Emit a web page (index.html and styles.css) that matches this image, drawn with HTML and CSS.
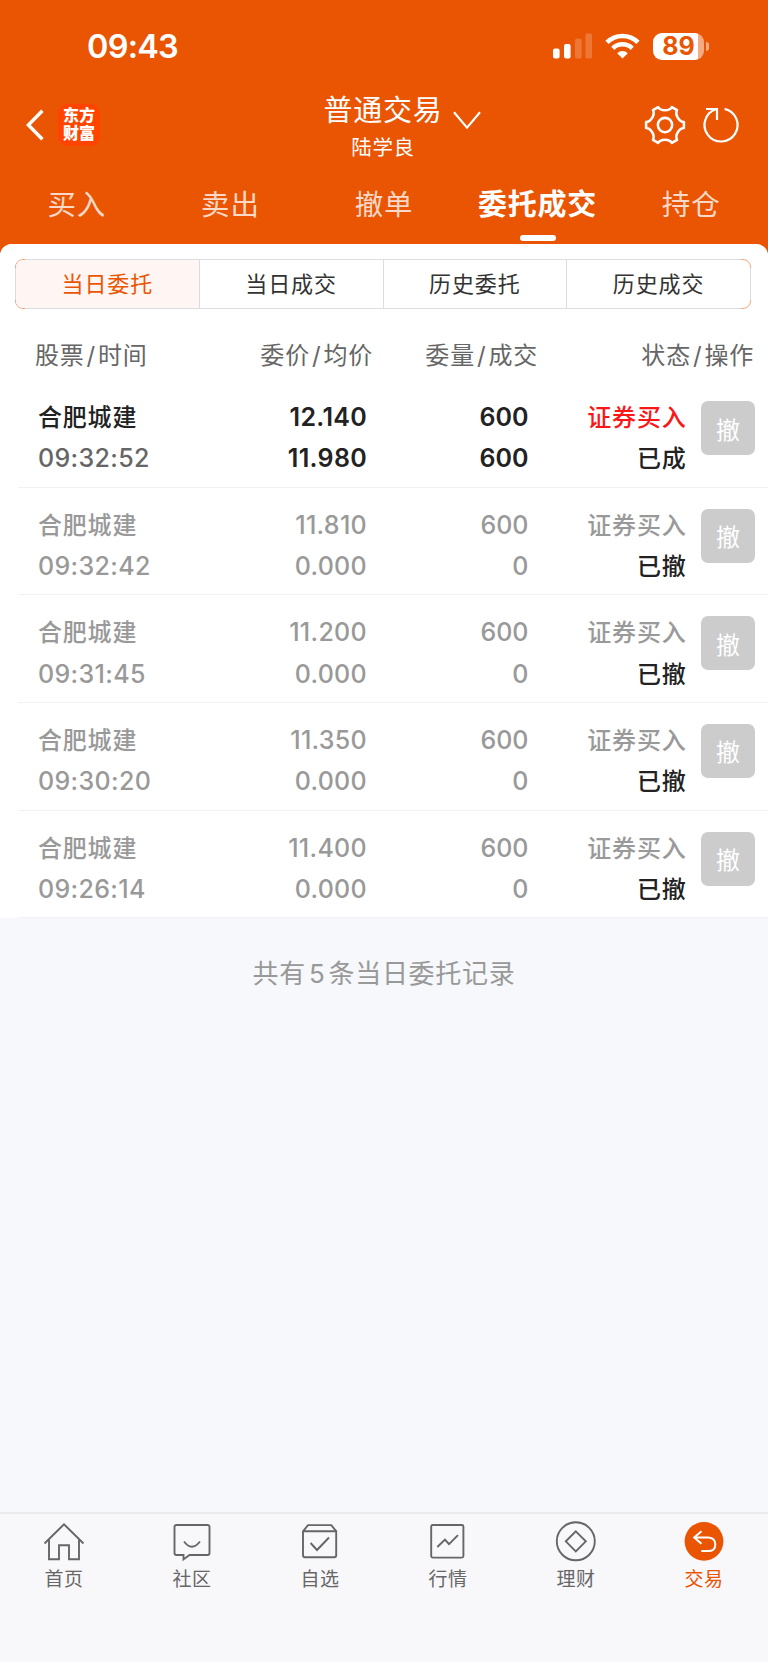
FILE: index.html
```html
<!DOCTYPE html>
<html lang="zh-CN">
<head>
    <meta charset="UTF-8">
    <meta name="viewport" content="width=device-width, initial-scale=1.0">
    <title>普通交易 - 委托成交</title>
    <link rel="stylesheet" href="styles.css">
</head>
<body>
    <header class="header">
        <div class="status-bar">
            <span class="clock">09:43</span>
            <div class="status-icons">
                <svg class="signal" width="39" height="26" viewBox="0 0 39 26" fill="#fff">
                    <rect x="0" y="15.5" width="6.6" height="10" rx="2"/>
                    <rect x="11" y="11" width="6.6" height="14.5" rx="2"/>
                    <rect x="22" y="5.5" width="6.6" height="20" rx="2" opacity=".2"/>
                    <rect x="32.4" y="0.3" width="6.6" height="25.2" rx="2" opacity=".2"/>
                </svg>
                <svg class="wifi" width="35" height="26" viewBox="0 0 35 26" fill="none" stroke="#fff" stroke-width="4.6">
                    <path d="M2 9.4a22 22 0 0 1 31 0"/>
                    <path d="M7.8 15.3a13.8 13.8 0 0 1 19.4 0"/>
                    <path d="M17.5 25.5l-5.3-5.3a7.6 7.6 0 0 1 10.6 0z" fill="#fff" stroke="none"/>
                </svg>
                <div class="battery"><span>89</span></div>
            </div>
        </div>

        <div class="nav-bar">
            <div class="nav-left">
                <svg width="18" height="32" viewBox="0 0 18 32" fill="none" stroke="#fff" stroke-width="3.4">
                    <path d="M16.4 1.8L2.4 16l14 14.2"/>
                </svg>
                <div class="app-logo">东方<br>财富</div>
            </div>
            <div class="nav-title">
                <div class="title-text">普通交易</div>
                <div class="user-name">陆学良</div>
                <svg class="chevron" width="28" height="19" viewBox="0 0 28 19" fill="none" stroke="#fff" stroke-width="2.2">
                    <path d="M1 1.2L14 16.6 27 1.2"/>
                </svg>
            </div>
            <div class="nav-right">
                <svg width="42" height="42" viewBox="-21 -21 42 42" fill="none" stroke="#fff" stroke-width="2.7" stroke-linejoin="round">
                    <g transform="scale(.94)">
                        <path d="M-7.3-19C-4.5-14.5 4.5-14.5 7.3-19L12.8-15.8C10.3-11.2 14.8-3.4 20.1-3.2V3.2C14.8 3.4 10.3 11.2 12.8 15.8L7.3 19C4.5 14.5-4.5 14.5-7.3 19L-12.8 15.8C-10.3 11.2-14.8 3.4-20.1 3.2V-3.2C-14.8-3.4-10.3-11.2-12.8-15.8Z"/>
                        <circle r="7.6"/>
                    </g>
                </svg>
                <svg width="38" height="38" viewBox="-19 -19 38 38" fill="none" stroke="#fff" stroke-width="2.2">
                    <path d="M3.600-16.100A16.500 16.500 0 1 1-5-15.700M-15-16H-4V-5"/>
                </svg>
            </div>
        </div>

        <nav class="tabs">
            <a class="tab">买入</a>
            <a class="tab">卖出</a>
            <a class="tab">撤单</a>
            <a class="tab active">委托成交</a>
            <a class="tab">持仓</a>
        </nav>
    </header>

    <main class="content">
        <section class="panel">
            <div class="segment">
                <div class="segment-item active">当日委托</div>
                <div class="segment-item">当日成交</div>
                <div class="segment-item">历史委托</div>
                <div class="segment-item">历史成交</div>
            </div>

            <div class="list-head">
                <span>股票<i>/</i>时间</span>
                <span>委价<i>/</i>均价</span>
                <span>委量<i>/</i>成交</span>
                <span>状态<i>/</i>操作</span>
            </div>

            <div class="order done">
                <div class="col"><b>合肥城建</b><span class="time">09:32:52</span></div>
                <div class="col price"><span>12.140</span><span>11.980</span></div>
                <div class="col"><span>600</span><span>600</span></div>
                <div class="col"><b class="side">证券买入</b><b class="state">已成</b></div>
                <button class="cancel">撤</button>
            </div>
            <div class="order">
                <div class="col"><b>合肥城建</b><span class="time">09:32:42</span></div>
                <div class="col price"><span>11.810</span><span>0.000</span></div>
                <div class="col"><span>600</span><span>0</span></div>
                <div class="col"><b class="side">证券买入</b><b class="state">已撤</b></div>
                <button class="cancel">撤</button>
            </div>
            <div class="order">
                <div class="col"><b>合肥城建</b><span class="time">09:31:45</span></div>
                <div class="col price"><span>11.200</span><span>0.000</span></div>
                <div class="col"><span>600</span><span>0</span></div>
                <div class="col"><b class="side">证券买入</b><b class="state">已撤</b></div>
                <button class="cancel">撤</button>
            </div>
            <div class="order">
                <div class="col"><b>合肥城建</b><span class="time">09:30:20</span></div>
                <div class="col price"><span>11.350</span><span>0.000</span></div>
                <div class="col"><span>600</span><span>0</span></div>
                <div class="col"><b class="side">证券买入</b><b class="state">已撤</b></div>
                <button class="cancel">撤</button>
            </div>
            <div class="order">
                <div class="col"><b>合肥城建</b><span class="time">09:26:14</span></div>
                <div class="col price"><span>11.400</span><span>0.000</span></div>
                <div class="col"><span>600</span><span>0</span></div>
                <div class="col"><b class="side">证券买入</b><b class="state">已撤</b></div>
                <button class="cancel">撤</button>
            </div>
        </section>
        <p class="summary">共有<i>5</i>条当日委托记录</p>
    </main>

    <footer class="tab-bar">
        <a class="bar-item">
            <svg width="42" height="42" viewBox="0 0 42 42">
                <path d="M1.5 22.5L21 3.3l19.5 19.2M6 18.5v19.7h10V24.3h10v13.9h10V18.5"/>
            </svg>
            <span>首页</span>
        </a>
        <a class="bar-item">
            <svg width="42" height="42" viewBox="0 0 42 42">
                <path d="M5.5 4h31q2 0 2 2v26q0 2-2 2H18.5l-6 4.4V34H5.5q-2 0-2-2V6q0-2 2-2zM13 20.5q7.8 10.5 16 0"/>
            </svg>
            <span>社区</span>
        </a>
        <a class="bar-item">
            <svg width="42" height="42" viewBox="0 0 42 42">
                <path d="M4 10.3h33.2v24q0 2-2 2H6q-2 0-2-2v-24l5-6.2h23.3l5 6.2M11.6 22l6.4 7L30 16.5"/>
            </svg>
            <span>自选</span>
        </a>
        <a class="bar-item">
            <svg width="42" height="42" viewBox="0 0 42 42">
                <rect x="4.2" y="4" width="32.2" height="32.6" rx="1.5"/>
                <path d="M10.3 26l7.7-7.400 4 4.500 9-9"/>
            </svg>
            <span>行情</span>
        </a>
        <a class="bar-item">
            <svg width="42" height="42" viewBox="0 0 42 42">
                <circle cx="20.8" cy="20.3" r="19"/>
                <path d="M20.8 10.3l10 10-10 10-10-10z"/>
            </svg>
            <span>理财</span>
        </a>
        <a class="bar-item active">
            <svg width="42" height="42" viewBox="0 0 42 42">
                <circle class="disc" cx="21" cy="20.3" r="19.4"/>
                <path class="arrow" d="M18.5 10.2l-7.3 6.2 7.3 6.3M11.5 16.4h13.8q7 .6 7 7 0 6.6-7 6.700h-7"/>
            </svg>
            <span>交易</span>
        </a>
    </footer>
</body>
</html>
```
FILE: styles.css
```css
:root {
    --primary: #ea5504;
    --page-bg: #f6f8fb;
    --text: #222;
    --muted: #999;
    --line: #dcdde3;
}

* {
    margin: 0;
    padding: 0;
    box-sizing: border-box;
}

body {
    height: 1662px;
    display: flex;
    flex-direction: column;
    background: var(--primary);
    font-family: Inter, "Noto Sans CJK SC", sans-serif;
    color: var(--text);
    overflow: hidden;
}

i {
    font-style: normal;
}

/* header */
.header {
    height: 244px;
    color: #fff;
}

.status-bar {
    height: 92px;
    padding: 0 58px 0 87px;
    display: flex;
    align-items: center;
    justify-content: space-between;
}

.clock {
    font-size: 32.5px;
    font-weight: 600;
    letter-spacing: -.8px;
}

.status-icons {
    display: flex;
    align-items: center;
}

.wifi {
    margin: 0 13px;
}

.battery {
    position: relative;
    width: 51px;
    height: 27px;
    margin-right: 6px;
    border-radius: 9px;
    background: linear-gradient(90deg, #fff 45.5px, rgba(255, 255, 255, .5) 45.5px);
    color: var(--primary);
    font-size: 25px;
    font-weight: 700;
    line-height: 27px;
    text-align: center;
}

.battery::after {
    content: '';
    position: absolute;
    right: -5px;
    top: 9px;
    width: 3px;
    height: 9px;
    border-radius: 0 4px 4px 0;
    background: rgba(255, 255, 255, .5);
}

.nav-bar {
    height: 72px;
    padding: 0 28px 0 26px;
    display: grid;
    grid-template-columns: 1fr auto 1fr;
    margin-top: -5px;
}

.nav-left,
.nav-right {
    display: flex;
    align-items: center;
}

.nav-left {
    gap: 14px;
}

.nav-right {
    justify-content: flex-end;
    gap: 16px;
}

.app-logo {
    width: 42px;
    height: 42px;
    padding-top: 3px;
    border-radius: 9px;
    background: #ff4400;
    font-size: 16px;
    font-weight: 900;
    line-height: 17.5px;
    text-align: center;
}

.nav-title {
    position: relative;
    padding-top: 2.5px;
    text-align: center;
}

.title-text {
    font-size: 29px;
    line-height: 42px;
    letter-spacing: .8px;
}

.user-name {
    font-size: 20.5px;
    line-height: 32px;
    letter-spacing: .6px;
}

.chevron {
    position: absolute;
    left: 100%;
    top: 24px;
    margin-left: 10px;
}

.tabs {
    display: flex;
    height: 85px;
}

.tab {
    position: relative;
    flex: 1;
    font-size: 28.5px;
    line-height: 92px;
    letter-spacing: .8px;
    text-align: center;
    white-space: nowrap;
    color: rgba(255, 255, 255, .78);
}

.tab.active {
    color: #fff;
    font-size: 29px;
    font-weight: 600;
}

.tab.active::after {
    content: '';
    position: absolute;
    left: 50%;
    bottom: 3px;
    width: 36px;
    height: 6px;
    margin-left: -18px;
    border-radius: 3px;
    background: #fff;
}

/* order list */
.content {
    flex: 1;
    background: var(--page-bg);
    border-radius: 12px 12px 0 0;
    overflow: hidden;
}

.panel {
    background: #fff;
    padding-top: 15px;
}

.segment {
    position: relative;
    display: flex;
    height: 50px;
    margin: 0 17px 0 15px;
    border: 1px solid #f0a684;
    border-radius: 8px;
}

/* grey edges, only the rounded corners stay orange */
.segment::before,
.segment::after {
    content: '';
    position: absolute;
    pointer-events: none;
}

.segment::before {
    inset: -1px 9px;
    border: solid var(--line);
    border-width: 1px 0;
}

.segment::after {
    inset: 8px -1px;
    border: solid var(--line);
    border-width: 0 1px;
}

.segment-item {
    flex: 1;
    font-size: 22px;
    line-height: 48px;
    letter-spacing: .9px;
    text-align: center;
    color: #333;
}

.segment-item + .segment-item {
    border-left: 1px solid var(--line);
}

.segment-item.active {
    border-radius: 7px 0 0 7px;
    background: #fff5f2;
    color: var(--primary);
}

.list-head {
    height: 71px;
    padding: 0 14px 0 35px;
    display: grid;
    grid-template-columns: 112px 226px 165px 1fr;
    font-size: 24px;
    line-height: 94px;
    letter-spacing: .8px;
    color: #666;
    text-align: right;
    white-space: nowrap;
}

.list-head span:first-child {
    text-align: left;
}

.list-head i {
    margin: 0 2px;
}

.order {
    height: 107.67px;
    margin-left: 18px;
    padding: 17px 13px 0 20px;
    display: grid;
    grid-template-columns: 150px 179px 161.5px 158px 1fr;
    align-items: start;
    border-bottom: 1px solid #f2f2f4;
    font-size: 25px;
    font-weight: 500;
    color: var(--muted);
    white-space: nowrap;
}

.col {
    display: flex;
    flex-direction: column;
    text-align: right;
    line-height: 41.33px;
}

.col:first-child {
    text-align: left;
}

.col b {
    font-size: 24px;
    font-weight: 500;
    letter-spacing: .8px;
}

.time {
    letter-spacing: .35px;
}

.price {
    letter-spacing: .3px;
}

.order.done {
    color: var(--text);
    font-weight: 600;
}

.order.done .time {
    color: #666;
    font-weight: 500;
}

.order.done .side {
    color: #fb1717;
}

.order .state {
    color: var(--text);
}

.cancel {
    width: 54px;
    height: 54px;
    margin-top: 4px;
    justify-self: end;
    border: none;
    border-radius: 7px;
    background: #ccc;
    color: #fff;
    font: 24px Inter, "Noto Sans CJK SC", sans-serif;
}

.summary {
    font-size: 26px;
    line-height: 112px;
    letter-spacing: .7px;
    text-align: center;
    color: var(--muted);
}

.summary i {
    margin: 0 3px;
}

/* bottom bar */
.tab-bar {
    height: 150px;
    display: flex;
    border-top: 2px solid #ebebed;
    background: #f8f8fb;
}

.bar-item {
    flex: 1;
    padding-top: 7px;
    display: flex;
    flex-direction: column;
    align-items: center;
    font-size: 19px;
    line-height: 34px;
    letter-spacing: .6px;
    color: #666;
}

.bar-item svg {
    fill: none;
    stroke: #666;
    stroke-width: 1.9;
}

.bar-item.active {
    color: var(--primary);
}

.bar-item .disc {
    fill: var(--primary);
    stroke: none;
}

.bar-item .arrow {
    stroke: #fff;
    stroke-width: 2;
}
```
